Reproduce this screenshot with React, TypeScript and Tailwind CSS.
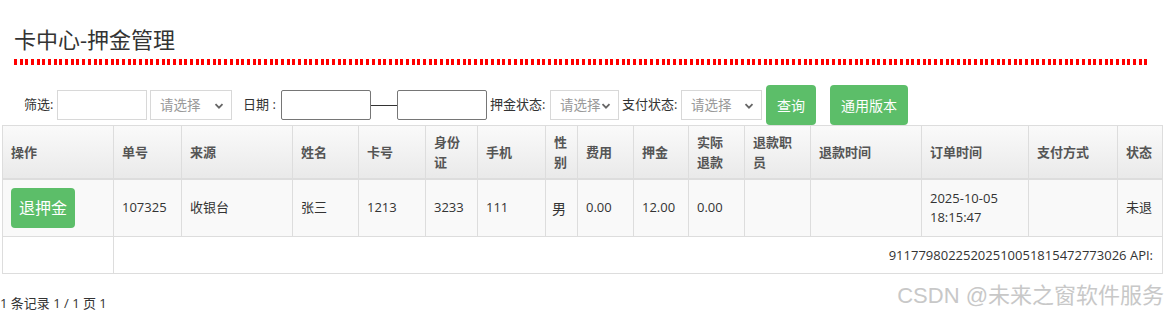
import React from 'react';

const font = { fontFamily: '"Open Sans", "Noto Sans CJK SC", sans-serif' };

const Chevron = () => (
  <svg width="10" height="10" viewBox="0 0 10 10" className="absolute right-[7px] top-[10px]">
    <path d="M1.5 3.2 L5 6.7 L8.5 3.2" fill="none" stroke="#666" strokeWidth="1.8" />
  </svg>
);

const FakeSelect = ({ width }: { width: number }) => (
  <div
    className="relative h-[30px] border border-[#d8d8d8] bg-white pl-[9px] text-[13.5px] leading-[28px] text-[#999]"
    style={{ width }}
  >
    请选择
    <Chevron />
  </div>
);

const cols = [111, 68, 111, 66, 67, 52, 68, 32, 56, 55, 56, 66, 111, 107, 89, 45];

const headers: React.ReactNode[] = [
  '操作', '单号', '来源', '姓名', '卡号',
  <>身份<br />证</>, '手机', <>性<br />别</>, '费用', '押金',
  <>实际<br />退款</>, <>退款职<br />员</>, '退款时间', '订单时间', '支付方式', '状态',
];

const App = () => {
  return (
    <div className="relative h-[316px] w-[1170px] overflow-hidden bg-white text-[#333]" style={font}>
      {/* 标题 */}
      <div className="px-[14px] pt-[24px]">
        <h1 className="text-[22px] leading-[30px] font-normal text-[#333]">卡中心-押金管理</h1>
        <div className="mt-[5px] h-[6px] w-[1136px] bg-[repeating-linear-gradient(90deg,#f00_0px,#f00_3px,transparent_3px,transparent_5.68px)]" />
      </div>

      {/* 筛选 */}
      <div className="mt-[20px] flex h-[40px] items-center text-[13px]">
        <span className="ml-[24px] w-[33px]">筛选:</span>
        <div className="h-[30px] w-[90px] border border-[#d8d8d8] bg-white" />
        <div className="ml-[3px]"><FakeSelect width={82} /></div>
        <span className="ml-[11px] w-[38px]">日期 :</span>
        <div className="h-[30px] w-[90px] rounded-[2px] border border-[#767676] bg-white" />
        <div className="h-[1px] w-[26px] bg-[#333]" />
        <div className="h-[30px] w-[90px] rounded-[2px] border border-[#767676] bg-white" />
        <span className="ml-[3px] w-[60px]">押金状态:</span>
        <FakeSelect width={69} />
        <span className="ml-[3px] w-[59px]">支付状态:</span>
        <FakeSelect width={81} />
        <button className="ml-[4px] h-[40px] w-[50px] rounded-[4px] bg-[#5cbe69] text-[14px] text-white">查询</button>
        <button className="ml-[14px] h-[40px] w-[78px] rounded-[4px] bg-[#5cbe69] text-[14px] text-white">通用版本</button>
      </div>

      {/* 列表 */}
      <table className="ml-[2px] w-[1160px] table-fixed border-collapse text-[13px]">
        <colgroup>
          {cols.map((w, i) => (
            <col key={i} style={{ width: w }} />
          ))}
        </colgroup>
        <thead>
          <tr className="bg-linear-to-b from-[#fafafa] to-[#e9e9e9]">
            {headers.map((h, i) => (
              <th
                key={i}
                className="border border-b-2 border-[#ddd] px-[8px] py-[6px] text-left align-middle font-bold leading-[20px] text-[#555]"
              >
                {h}
              </th>
            ))}
          </tr>
        </thead>
        <tbody>
          <tr className="bg-[#f9f9f9]">
            <td className="border border-[#ddd] px-[8px] py-[8px]">
              <button className="h-[40px] w-[64px] rounded-[4px] bg-[#5cbe69] text-[16px] text-white">退押金</button>
            </td>
            <td className="border border-[#ddd] px-[8px]">107325</td>
            <td className="border border-[#ddd] px-[8px]">收银台</td>
            <td className="border border-[#ddd] px-[8px]">张三</td>
            <td className="border border-[#ddd] px-[8px]">1213</td>
            <td className="border border-[#ddd] px-[8px]">3233</td>
            <td className="border border-[#ddd] px-[8px]">111</td>
            <td className="border border-[#ddd] px-[6px] text-[14px]">男</td>
            <td className="border border-[#ddd] px-[8px]">0.00</td>
            <td className="border border-[#ddd] px-[8px]">12.00</td>
            <td className="border border-[#ddd] px-[8px]">0.00</td>
            <td className="border border-[#ddd] px-[8px]"></td>
            <td className="border border-[#ddd] px-[8px]"></td>
            <td className="border border-[#ddd] px-[8px] leading-[19px]">2025-10-05<br />18:15:47</td>
            <td className="border border-[#ddd] px-[8px]"></td>
            <td className="border border-[#ddd] px-[8px] whitespace-nowrap">未退</td>
          </tr>
          <tr className="bg-white">
            <td className="border border-[#ddd] px-[8px] py-[8px] leading-[19px]"></td>
            <td colSpan={15} className="border border-[#ddd] px-[9px] pt-[9px] pb-[8px] text-right leading-[19px]">
              91177980225202510051815472773026 API:
            </td>
          </tr>
        </tbody>
      </table>

      <div className="mt-[20px] text-[13px] leading-[18px] text-[#333]">1 条记录 1 / 1 页 1</div>

      {/* 水印 */}
      <div
        className="absolute right-[6px] top-[281px] text-[22px] leading-[30px] text-[#c8c8c8]"
        style={{ fontFamily: '"Liberation Sans", "Noto Sans CJK SC", sans-serif' }}
      >
        CSDN @未来之窗软件服务
      </div>
    </div>
  );
};

export default App;
